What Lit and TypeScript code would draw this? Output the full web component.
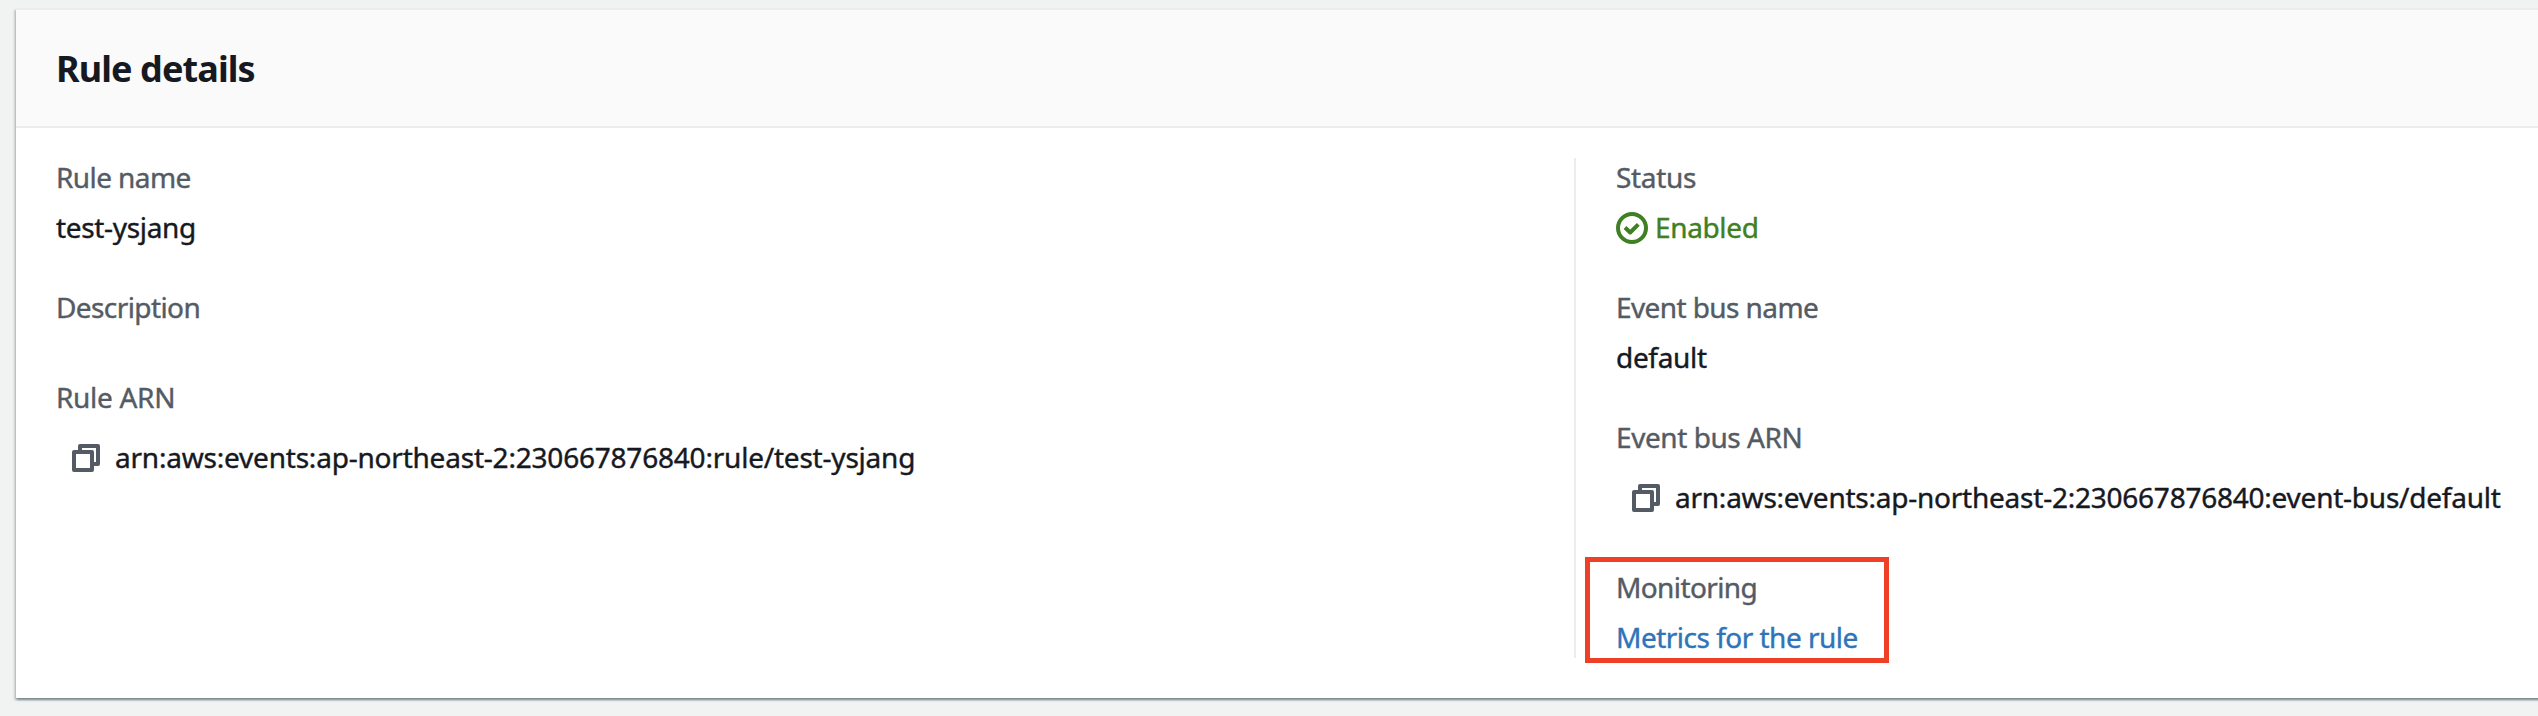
import { LitElement, html, css, svg, nothing } from "lit";
import { customElement, property } from "lit/decorators.js";
import { styleMap } from "lit/directives/style-map.js";

type Kind = "text" | "arn" | "status" | "link" | "empty";

interface Field {
  label: string;
  value: string;
  kind: Kind;
  /** Tracking in px for the label and the value. */
  track: [number, number];
  marked?: boolean;
}

const COLUMNS: Field[][] = [
  [
    { label: "Rule name", value: "test-ysjang", kind: "text", track: [-0.59, -0.34] },
    { label: "Description", value: "", kind: "empty", track: [-0.59, 0] },
    {
      label: "Rule ARN",
      value: "arn:aws:events:ap-northeast-2:230667876840:rule/test-ysjang",
      kind: "arn",
      track: [-0.3, -0.21],
    },
  ],
  [
    { label: "Status", value: "Enabled", kind: "status", track: [-0.32, -0.36] },
    { label: "Event bus name", value: "default", kind: "text", track: [-0.59, -0.32] },
    {
      label: "Event bus ARN",
      value: "arn:aws:events:ap-northeast-2:230667876840:event-bus/default",
      kind: "arn",
      track: [-0.44, -0.235],
    },
    { label: "Monitoring", value: "Metrics for the rule", kind: "link", track: [-0.61, -0.51], marked: true },
  ],
];

const copyIcon = svg`
  <path d="M10 9V4h18v18h-5" />
  <path d="M4 10h18v18H4z" />`;

const checkIcon = svg`
  <circle cx="16" cy="16" r="14" />
  <path d="M9 15.5l5.2 5L22.3 12.4" />`;

@customElement("detail-field")
class DetailField extends LitElement {
  @property({ attribute: false }) field!: Field;

  static styles = css`
    :host {
      display: block;
      position: relative;
    }
    .label,
    .value {
      line-height: 38px;
      white-space: nowrap;
      -webkit-text-stroke: 0.4px currentColor;
    }
    .label {
      color: #545b64;
    }
    .value {
      display: flex;
      align-items: center;
      height: 38px;
      margin-top: 12px;
      color: #16191f;
    }
    .empty {
      height: 0;
      margin-top: 10px;
    }
    .arn {
      margin: 22px 0 10px;
      padding-left: 14px;
      gap: 13px;
    }
    .status {
      color: #3f8023;
      gap: 7px;
    }
    .link {
      color: #2f74b8;
    }
    a {
      color: inherit;
      text-decoration: none;
    }
    svg {
      flex: none;
      width: 32px;
      height: 32px;
      margin-top: 2px;
      fill: none;
      stroke: currentColor;
      stroke-width: 4;
      stroke-linejoin: round;
    }
    .copy {
      color: #545b64;
    }
    .mark {
      position: absolute;
      box-sizing: border-box;
      left: -31px;
      top: -11px;
      width: 304px;
      height: 106px;
      border: 5px solid #ee4026;
    }
  `;

  private icon(kind: Kind) {
    if (kind === "arn") return html`<svg class="copy" viewBox="0 0 32 32">${copyIcon}</svg>`;
    if (kind === "status") return html`<svg viewBox="0 0 32 32">${checkIcon}</svg>`;
    return nothing;
  }

  render() {
    const { label, value, kind, track, marked } = this.field;
    const spacing = (px: number) => styleMap({ letterSpacing: `${px}px` });
    return html`
      <div class="label" style=${spacing(track[0])}>${label}</div>
      <div class="value ${kind}" style=${spacing(track[1])}>
        ${this.icon(kind)}${kind === "link" ? html`<a href="#">${value}</a>` : html`<span>${value}</span>`}
      </div>
      ${marked ? html`<div class="mark"></div>` : nothing}
    `;
  }
}

@customElement("app-root")
class AppRoot extends LitElement {
  static styles = css`
    :host {
      display: block;
      box-sizing: border-box;
      height: 716px;
      padding: 8px 0 0 16px;
      overflow: hidden;
      background: #f1f3f3;
      font: 28px "Noto Sans", "Open Sans", sans-serif;
    }
    .card {
      box-sizing: border-box;
      width: 2600px;
      height: 690px;
      background: #fff;
      border-top: 2px solid #eaeded;
      box-shadow:
        0 2px 2px 0 rgba(0, 28, 36, 0.3),
        2px 2px 2px 0 rgba(0, 28, 36, 0.15),
        -2px 2px 2px 0 rgba(0, 28, 36, 0.15);
    }
    header {
      box-sizing: border-box;
      height: 118px;
      padding: 34px 40px 0;
      background: #fafafa;
      border-bottom: 2px solid #eaeded;
    }
    h2 {
      margin: 0;
      color: #16191f;
      font-size: 36px;
      font-weight: 700;
      line-height: 50px;
      letter-spacing: -0.9px;
    }
    .columns {
      display: grid;
      grid-template-columns: 1518px 1fr;
      padding: 30px 40px 0;
    }
    .column {
      box-sizing: border-box;
      display: flex;
      flex-direction: column;
      gap: 42px;
      height: 500px;
    }
    .column + .column {
      border-left: 2px solid #eaeded;
      padding-left: 40px;
    }
  `;

  render() {
    return html`
      <section class="card">
        <header><h2>Rule details</h2></header>
        <div class="columns">
          ${COLUMNS.map(
            (fields) => html`<div class="column">
              ${fields.map((f) => html`<detail-field .field=${f}></detail-field>`)}
            </div>`
          )}
        </div>
      </section>
    `;
  }
}
